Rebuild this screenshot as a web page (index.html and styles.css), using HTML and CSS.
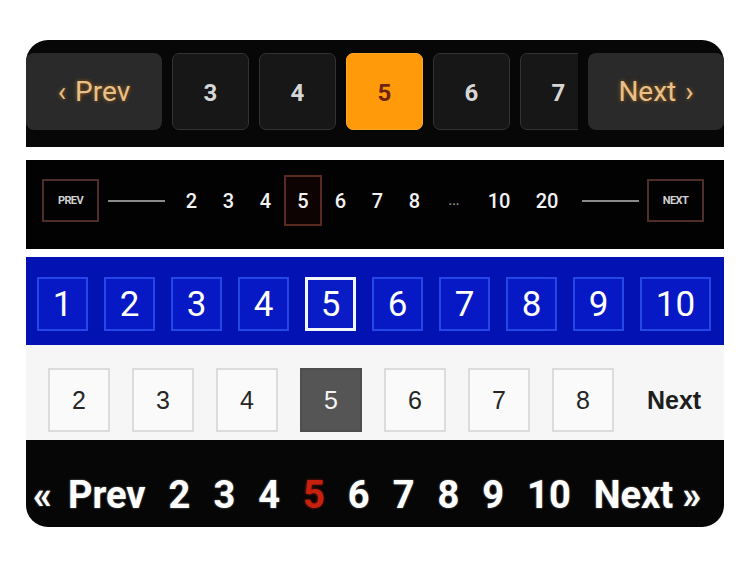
FILE: index.html
```html
<!DOCTYPE html>
<html lang="en">
<head>
<meta charset="utf-8">
<title>Pagination styles</title>
<link rel="stylesheet" href="styles.css">
</head>
<body>
<div class="frame">
  <nav class="p1">
    <a class="p1-nav">&lsaquo; Prev</a>
    <div class="p1-pages">
      <a class="p1-page">3</a>
      <a class="p1-page">4</a>
      <a class="p1-page current">5</a>
      <a class="p1-page">6</a>
      <a class="p1-page">7</a>
    </div>
    <a class="p1-nav">Next &rsaquo;</a>
  </nav>

  <nav class="p2">
    <a class="p2-box">PREV</a>
    <span class="p2-line"></span>
    <div class="p2-nums">
      <a class="p2-num">2</a>
      <a class="p2-num">3</a>
      <a class="p2-num">4</a>
      <a class="p2-num current">5</a>
      <a class="p2-num">6</a>
      <a class="p2-num">7</a>
      <a class="p2-num">8</a>
      <span class="p2-num dots">...</span>
      <a class="p2-num wide">10</a>
      <a class="p2-num wide">20</a>
    </div>
    <span class="p2-line last"></span>
    <a class="p2-box">NEXT</a>
  </nav>

  <nav class="p3">
    <a class="p3-page">1</a>
    <a class="p3-page">2</a>
    <a class="p3-page">3</a>
    <a class="p3-page">4</a>
    <a class="p3-page current">5</a>
    <a class="p3-page">6</a>
    <a class="p3-page">7</a>
    <a class="p3-page">8</a>
    <a class="p3-page">9</a>
    <a class="p3-page wide">10</a>
  </nav>

  <nav class="p4">
    <a class="p4-page">2</a>
    <a class="p4-page">3</a>
    <a class="p4-page">4</a>
    <a class="p4-page current">5</a>
    <a class="p4-page">6</a>
    <a class="p4-page">7</a>
    <a class="p4-page">8</a>
    <a class="p4-next">Next</a>
  </nav>

  <nav class="p5">
    <a class="p5-item"><span class="p5-arrow">&laquo;</span>Prev</a>
    <a class="p5-item">2</a>
    <a class="p5-item">3</a>
    <a class="p5-item">4</a>
    <a class="p5-item current">5</a>
    <a class="p5-item">6</a>
    <a class="p5-item">7</a>
    <a class="p5-item">8</a>
    <a class="p5-item">9</a>
    <a class="p5-item">10</a>
    <a class="p5-item">Next<span class="p5-arrow after">&raquo;</span></a>
  </nav>
</div>
</body>
</html>
```

FILE: styles.css
```css
html, body {
  margin: 0;
  padding: 0;
  background: #ffffff;
}

body {
  font-family: Roboto, "Liberation Sans", Arial, sans-serif;
}

a {
  text-decoration: none;
}

.frame {
  margin: 40px 0 0 26px;
  width: 698px;
  border-radius: 22px;
  overflow: hidden;
  display: flex;
  flex-direction: column;
}

/* ---------- Row 1: dark rounded buttons ---------- */
.p1 {
  height: 107px;
  background: #070707;
  display: flex;
  align-items: flex-start;
  padding-top: 13px;
  box-sizing: border-box;
  gap: 10px;
}

.p1-nav {
  width: 136px;
  height: 77px;
  flex: none;
  background: #2a2a2a;
  border-radius: 8px;
  display: flex;
  align-items: center;
  justify-content: center;
  color: #e9c089;
  font-size: 28px;
  word-spacing: 2px;
  text-shadow: 0 0 4px rgba(200, 120, 20, 0.7);
}

.p1-pages {
  flex: 1;
  display: flex;
  gap: 10px;
  overflow: hidden;
}

.p1-page {
  width: 77px;
  height: 77px;
  flex: none;
  box-sizing: border-box;
  background: #171717;
  border: 1px solid #333333;
  border-radius: 7px;
  display: flex;
  align-items: center;
  justify-content: center;
  padding-top: 3px;
  color: #d6d6d6;
  font-size: 24px;
  font-weight: 700;
}

.p1-page.current {
  background: #ff9a0a;
  border-color: #ffa624;
  color: #6e2410;
}

/* ---------- Row 2: outlined prev/next ---------- */
.p2 {
  margin-top: 13px;
  height: 89px;
  background: #030202;
  display: flex;
  align-items: center;
  padding: 0 0 8px 16px;
  box-sizing: border-box;
}

.p2-box {
  width: 57px;
  height: 43px;
  box-sizing: border-box;
  border: 2px solid #4e2e28;
  display: flex;
  align-items: center;
  justify-content: center;
  color: #d0d0d0;
  font-size: 11px;
  font-weight: 700;
  letter-spacing: -0.6px;
}

.p2-line {
  width: 57px;
  height: 2px;
  background: #8a8a8a;
  margin: 0 8px 0 9px;
}

.p2-line.last {
  margin: 0 8px 0 11px;
}

.p2-nums {
  display: flex;
  align-items: center;
}

.p2-num {
  width: 37px;
  height: 51px;
  display: flex;
  align-items: center;
  justify-content: center;
  color: #f2f2f2;
  font-size: 20px;
  font-weight: 500;
  box-sizing: border-box;
}

.p2-num.current {
  width: 38px;
  border: 2px solid #5a2a20;
  background: #0e0303;
}

.p2-num.dots {
  width: 42px;
  color: #9a9a9a;
  font-size: 13px;
}

.p2-num.wide {
  width: 48px;
}

/* ---------- Row 3: blue squares ---------- */
.p3 {
  margin-top: 8px;
  height: 88px;
  background: #0312b2;
  display: flex;
  align-items: flex-start;
  padding: 20px 0 0 11px;
  box-sizing: border-box;
  gap: 16px;
}

.p3-page {
  width: 51px;
  height: 54px;
  box-sizing: border-box;
  border: 2px solid #2447e6;
  background: #0619c4;
  display: flex;
  align-items: center;
  justify-content: center;
  color: #ffffff;
  font-size: 35px;
}

.p3-page.wide {
  width: 71px;
}

.p3-page.current {
  border: 3px solid #f4f6ff;
  background: #0a1cc6;
}

/* ---------- Row 4: light squares ---------- */
.p4 {
  height: 95px;
  background: #f6f6f6;
  display: flex;
  align-items: flex-start;
  padding: 23px 0 0 22px;
  box-sizing: border-box;
  gap: 22px;
  font-family: "Liberation Sans", Arial, sans-serif;
}

.p4-page {
  width: 62px;
  height: 64px;
  box-sizing: border-box;
  border: 2px solid #dcdcdc;
  background: #fafafa;
  display: flex;
  align-items: center;
  justify-content: center;
  color: #262626;
  font-size: 25px;
}

.p4-page.current {
  background: #555555;
  border-color: #4e4e4e;
  color: #f4f4f4;
}

.p4-next {
  margin-left: 11px;
  height: 64px;
  display: flex;
  align-items: center;
  color: #1e1e1e;
  font-size: 25px;
  font-weight: 700;
}

/* ---------- Row 5: big bold text ---------- */
.p5 {
  height: 87px;
  background: #060606;
  display: flex;
  align-items: center;
  padding: 22px 0 0 7px;
  box-sizing: border-box;
  gap: 23px;
}

.p5-item {
  display: flex;
  align-items: center;
  color: #ffffff;
  font-size: 38px;
  font-weight: 700;
  white-space: pre;
  text-shadow: 0 0 2px rgba(255, 255, 255, 0.5);
}

.p5-arrow {
  margin-right: 16px;
}

.p5-arrow.after {
  margin: 0 0 0 9px;
}

.p5-item.current {
  color: #c8200e;
  text-shadow: 0 0 3px rgba(220, 40, 20, 0.6);
}
```
